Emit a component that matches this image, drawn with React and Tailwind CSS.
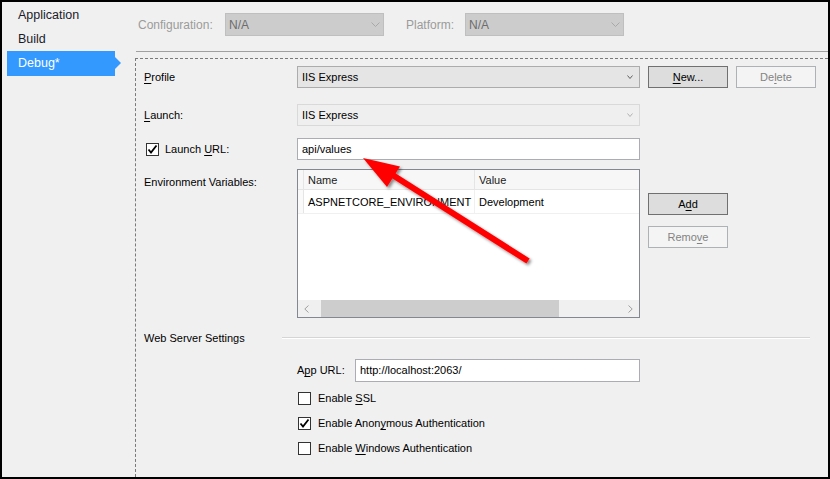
import React from 'react';

const Chevron = ({ color = '#606060', w = 6, h = 4 }) => (
  <svg width={w} height={h} viewBox={`0 0 ${w} ${h}`} className="shrink-0">
    <polyline points={`0.5,0.5 ${w / 2},${h - 0.5} ${w - 0.5},0.5`} fill="none" stroke={color} strokeWidth="1" />
  </svg>
);

const Check = () => (
  <svg width="11" height="11" viewBox="0 0 11 11">
    <polyline points="1.5,5.5 4,8.5 9.5,1.5" fill="none" stroke="#000" strokeWidth="1.8" />
  </svg>
);

const CheckBox = ({ checked }) => (
  <div className="w-[13px] h-[13px] border border-[#333333] bg-white flex items-center justify-center shrink-0">
    {checked && <Check />}
  </div>
);

const U = ({ children }) => <span className="underline underline-offset-[2px]">{children}</span>;

const Button = ({ children, disabled }) => (
  <div
    className={
      disabled
        ? 'w-[80px] h-[22px] border border-[#adb2b5] bg-[#f4f4f4] text-[#838383] flex items-center justify-center'
        : 'w-[80px] h-[22px] border border-[#707070] bg-[#dddddd] text-black flex items-center justify-center'
    }
  >
    {children}
  </div>
);

const App = () => {
  return (
    <div
      className="relative w-[830px] h-[479px] overflow-hidden border-2 border-black bg-[#f0f0f0] flex text-[11px] text-black"
      style={{ fontFamily: '"Liberation Sans", Arial, sans-serif' }}
    >
      {/* Side nav */}
      <div className="w-[133px] shrink-0 pl-[5px] pt-[1px] text-[12.5px] text-[#1b1b2b]">
        <div className="h-[24px] flex items-center pl-[11px]">Application</div>
        <div className="h-[24px] flex items-center pl-[11px]">Build</div>
        <div className="relative h-[25px] w-[108px] flex items-center pl-[11px] bg-[#3399ff] text-white">
          Debug*
          <div className="absolute right-[-6px] top-[6px] w-0 h-0 border-y-[6px] border-y-transparent border-l-[6px] border-l-[#3399ff]" />
        </div>
      </div>

      {/* Main */}
      <div className="flex-1 flex flex-col min-w-0">
        <div className="h-[49px] pl-[3px] pt-[11px] flex items-start text-[12px]">
          <div className="h-[23px] flex items-center text-[#9b9b9b] w-[87px]">Configuration:</div>
          <div className="w-[159px] h-[23px] border border-[#bfbfbf] bg-[#cccccc] flex items-center justify-between pl-[3px] pr-[3px] text-[#6d6d6d]">
            <span>N/A</span>
            <Chevron color="#a8a8a8" w={9} h={5} />
          </div>
          <div className="h-[23px] flex items-center text-[#9b9b9b] ml-[22px] w-[59px]">Platform:</div>
          <div className="w-[159px] h-[23px] border border-[#bfbfbf] bg-[#cccccc] flex items-center justify-between pl-[3px] pr-[3px] text-[#6d6d6d]">
            <span>N/A</span>
            <Chevron color="#a8a8a8" w={9} h={5} />
          </div>
        </div>
        <div className="h-px bg-[#a0a0a0] ml-px" />

        <div className="mt-[6px] flex-1 border-l border-t border-dashed border-[#7a7a7a] pl-[8px] pt-[7px] flex flex-col">
          {/* Profile */}
          <div className="flex items-center h-[22px]">
            <div className="w-[153px]"><U>P</U>rofile</div>
            <div className="w-[343px] h-[22px] border border-[#acacac] bg-[#e5e5e5] flex items-center justify-between pl-[4px] pr-[6px]">
              <span>IIS Express</span>
              <Chevron />
            </div>
            <div className="flex gap-[8px] ml-[8px]">
              <Button><U>N</U>ew...</Button>
              <Button disabled>De<U>l</U>ete</Button>
            </div>
          </div>

          {/* Launch */}
          <div className="flex items-center h-[22px] mt-[16px]">
            <div className="w-[153px]"><U>L</U>aunch:</div>
            <div className="w-[343px] h-[22px] border border-[#d9d9d9] bg-[#efefef] flex items-center justify-between pl-[4px] pr-[6px]">
              <span>IIS Express</span>
              <Chevron color="#b0b0b0" />
            </div>
          </div>

          {/* Launch URL */}
          <div className="flex items-center h-[22px] mt-[12px]">
            <div className="w-[153px] flex items-center gap-[6px] pl-[2px]">
              <CheckBox checked />
              <span>Launch <U>U</U>RL:</span>
            </div>
            <div className="w-[343px] h-[22px] border border-[#abadb3] bg-white flex items-center pl-[4px]">
              api/values
            </div>
          </div>

          {/* Environment variables */}
          <div className="flex mt-[9px]">
            <div className="w-[153px] pt-[5px]">Environment Variables:</div>
            <div className="w-[343px] h-[149px] border border-[#828790] bg-white flex flex-col">
              <div className="flex h-[20px] bg-[#f7f7f7] border-b border-[#e5e5e5]">
                <div className="w-[6px] border-r border-[#e5e5e5]" />
                <div className="w-[171px] border-r border-[#e5e5e5] pl-[4px] pt-[1px] flex items-center text-[#1a1a1a]">Name</div>
                <div className="flex-1 pl-[4px] pt-[1px] flex items-center text-[#1a1a1a]">Value</div>
              </div>
              <div className="flex h-[24px] border-b border-[#f0f0f0]">
                <div className="w-[6px] border-r border-[#e5e5e5] bg-[#fafafa]" />
                <div className="w-[171px] border-r border-[#f0f0f0] pl-[4px] pt-[2px] flex items-center overflow-hidden whitespace-nowrap">ASPNETCORE_ENVIRONMENT</div>
                <div className="flex-1 pl-[4px] pt-[2px] flex items-center">Development</div>
              </div>
              <div className="flex-1" />
              <div className="h-[17px] bg-[#f0f0f0] flex items-center">
                <div className="w-[17px] h-full flex items-center justify-center">
                  <svg width="5" height="8" viewBox="0 0 5 8"><polyline points="4.5,0.5 0.8,4 4.5,7.5" fill="none" stroke="#a0a0a0" /></svg>
                </div>
                <div className="w-[238px] h-full bg-[#cdcdcd] ml-[6px]" />
                <div className="flex-1" />
                <div className="w-[17px] h-full flex items-center justify-center">
                  <svg width="5" height="8" viewBox="0 0 5 8"><polyline points="0.5,0.5 4.2,4 0.5,7.5" fill="none" stroke="#a0a0a0" /></svg>
                </div>
              </div>
            </div>
            <div className="ml-[8px] pt-[24px] flex flex-col gap-[11px]">
              <Button>A<U>d</U>d</Button>
              <Button disabled>Remo<U>v</U>e</Button>
            </div>
          </div>

          {/* Web server settings */}
          <div className="flex items-center h-[14px] mt-[13px]">
            <div className="w-[138px]">Web Server Settings</div>
            <div className="flex-1 mr-[18px] border-t border-[#d5d5d5] border-b border-b-white" />
          </div>

          <div className="flex items-center h-[23px] mt-[14px] pl-[153px]">
            <div className="w-[58px]">A<U>p</U>p URL:</div>
            <div className="w-[285px] h-[23px] border border-[#abadb3] bg-white flex items-center pl-[4px]">
              http://localhost:2063/
            </div>
          </div>

          <div className="flex flex-col gap-[12px] mt-[10px] pl-[154px]">
            <div className="flex items-center h-[13px] gap-[7px]">
              <CheckBox />
              <span>Enable <U>S</U>SL</span>
            </div>
            <div className="flex items-center h-[13px] gap-[7px]">
              <CheckBox checked />
              <span>Enable Anon<U>y</U>mous Authentication</span>
            </div>
            <div className="flex items-center h-[13px] gap-[7px]">
              <CheckBox />
              <span>Enable <U>W</U>indows Authentication</span>
            </div>
          </div>
        </div>
      </div>

      {/* Annotation arrow */}
      <svg className="absolute left-[-2px] top-[-2px] pointer-events-none" width="830" height="479" viewBox="0 0 830 479">
        <defs>
          <filter id="sh" x="-20%" y="-20%" width="140%" height="140%">
            <feDropShadow dx="2" dy="2" stdDeviation="1.5" floodColor="#000" floodOpacity="0.45" />
          </filter>
        </defs>
        <g filter="url(#sh)">
          <line x1="391" y1="174" x2="528" y2="261" stroke="#ff0000" strokeWidth="6" />
          <polygon points="363,158 400,166.5 387,187" fill="#ff0000" />
        </g>
      </svg>
    </div>
  );
};

export default App;
